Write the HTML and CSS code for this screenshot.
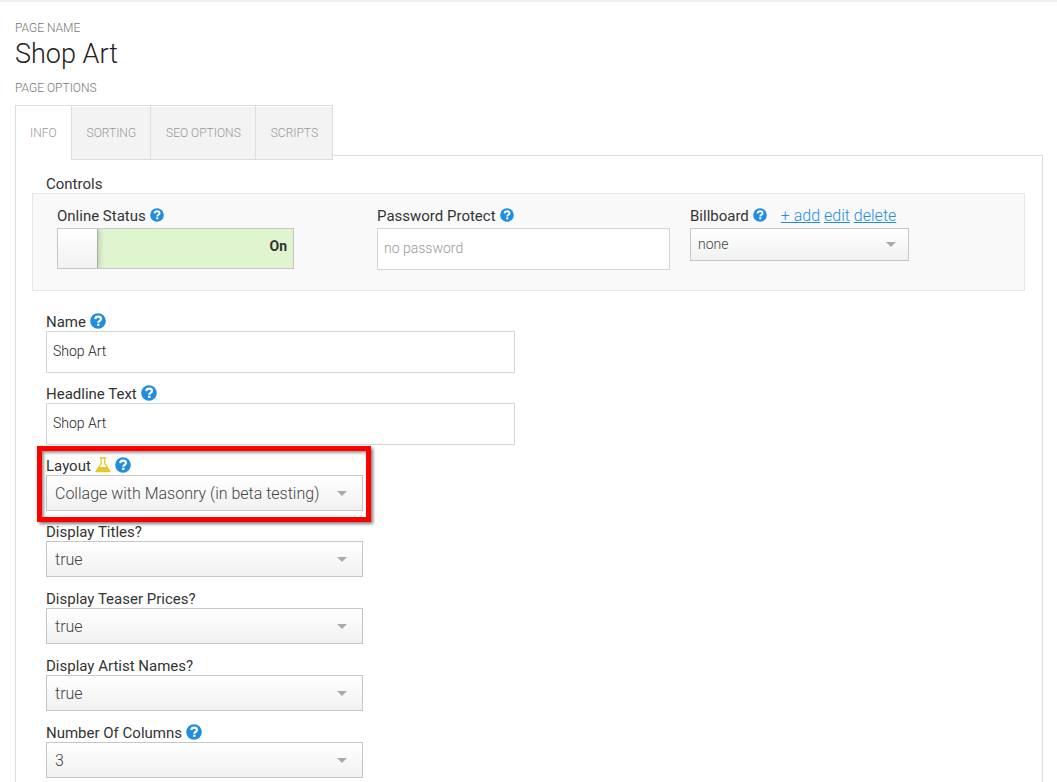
FILE: index.html
```html
<!DOCTYPE html>
<html lang="en">
<head>
<meta charset="utf-8">
<title>Shop Art</title>
<link rel="stylesheet" href="styles.css">
</head>
<body>
<svg class="sprite" aria-hidden="true">
  <symbol id="help" viewBox="0 0 16 16">
    <circle cx="8" cy="8" r="7.8" fill="#1f8de0"/>
    <path d="M5.2 6.200C5.400 4.500 6.500 3.700 8.100 3.700c1.700 0 2.800.9 2.800 2.200 0 1.900-2.600 1.900-2.600 3.800" fill="none" stroke="#fff" stroke-width="2.200"/>
    <rect x="7.1" y="10.700" width="2.400" height="2.200" fill="#fff"/>
  </symbol>
  <symbol id="flask" viewBox="0 0 16 16">
    <path d="M4.800 1h6.400M6.200 1v5.500L1.300 14.200h13.400L9.800 6.500V1" fill="none" stroke="#e6c72d" stroke-width="1.300"/>
    <path d="M3.800 10h8.400l3.600 5.300H.2z" fill="#e6c72d"/>
  </symbol>
</svg>
<header class="page-head">
  <p class="caption">PAGE NAME</p>
  <h1 class="title">Shop Art</h1>
  <p class="caption">PAGE OPTIONS</p>
</header>
<nav class="tabs" role="tablist">
  <button class="tab tab-active" type="button" role="tab" aria-selected="true">INFO</button>
  <button class="tab" type="button" role="tab" aria-selected="false">SORTING</button>
  <button class="tab" type="button" role="tab" aria-selected="false">SEO OPTIONS</button>
  <button class="tab" type="button" role="tab" aria-selected="false">SCRIPTS</button>
</nav>
<main class="panel">
  <h2 class="section-title">Controls</h2>
  <section class="controls">
    <div class="control">
      <div class="label-row"><label for="online">Online Status</label><svg class="icon icon-small"><use href="#help"/></svg></div>
      <div class="switch">
        <input class="switch-input" type="checkbox" role="switch" id="online" checked>
        <span class="switch-text">On</span>
      </div>
    </div>
    <div class="control">
      <div class="label-row"><label for="password">Password Protect</label><svg class="icon icon-small"><use href="#help"/></svg></div>
      <input class="text-input password" type="text" id="password" placeholder="no password">
    </div>
    <div class="control">
      <div class="label-row"><label for="billboard">Billboard</label><svg class="icon icon-small"><use href="#help"/></svg>
        <span class="links"><a href="#add">+ add</a> <a href="#edit">edit</a> <a href="#delete">delete</a></span></div>
      <select class="select select-small" id="billboard"><option>none</option></select>
    </div>
  </section>
  <form class="form">
    <div class="fields">
      <div class="field">
        <div class="label-row"><label for="name">Name</label><svg class="icon"><use href="#help"/></svg></div>
        <input class="text-input" type="text" id="name" value="Shop Art">
      </div>
      <div class="field">
        <div class="label-row"><label for="headline">Headline Text</label><svg class="icon"><use href="#help"/></svg></div>
        <input class="text-input" type="text" id="headline" value="Shop Art">
      </div>
      <div class="field field-select field-marked">
        <div class="label-row"><label for="layout">Layout</label><svg class="icon"><use href="#flask"/></svg><svg class="icon"><use href="#help"/></svg></div>
        <select class="select" id="layout"><option>Collage with Masonry (in beta testing)</option></select>
      </div>
    </div>
    <div class="fields fields-display">
      <div class="field field-select">
        <div class="label-row"><label for="titles">Display Titles?</label></div>
        <select class="select" id="titles"><option>true</option><option>false</option></select>
      </div>
      <div class="field field-select">
        <div class="label-row"><label for="prices">Display Teaser Prices?</label></div>
        <select class="select" id="prices"><option>true</option><option>false</option></select>
      </div>
      <div class="field field-select">
        <div class="label-row"><label for="artists">Display Artist Names?</label></div>
        <select class="select" id="artists"><option>true</option><option>false</option></select>
      </div>
      <div class="field field-select">
        <div class="label-row"><label for="columns">Number Of Columns</label><svg class="icon"><use href="#help"/></svg></div>
        <select class="select" id="columns"><option>3</option><option>4</option></select>
      </div>
    </div>
  </form>
</main>
</body>
</html>
```

FILE: styles.css
```css
* { box-sizing: border-box; }

body {
  display: flex;
  flex-direction: column;
  min-height: 100vh;
  margin: 0;
  padding: 18px 14px 0 15px;
  border-top: 2px solid #eee;
  background: #fff;
  color: #333;
  font: 15px/18px Roboto, "Liberation Sans", sans-serif;
}

.sprite { display: none; }

.caption {
  margin: 0;
  color: #777;
  font-size: 12px;
  font-weight: 300;
  line-height: 16px;
}

.title {
  margin: 0 0 8px;
  color: #222;
  font-size: 27px;
  font-weight: 300;
  line-height: 36px;
}

.tabs {
  position: relative;
  display: flex;
  align-items: flex-start;
  margin: 9px 0 -5px;
}

.tab {
  height: 55px;
  margin: 0;
  padding: 0 14px 0 15px;
  border: 1px solid #ddd;
  border-left-width: 0;
  background: #f3f3f3;
  box-shadow: inset 0 1px #fff;
  color: #999;
  font: 300 12px/16px Roboto, "Liberation Sans", sans-serif;
}

.tab-active {
  padding-left: 14px;
  border-left-width: 1px;
  border-bottom: 0;
  background: #fff;
}

.panel {
  flex: 1;
  padding: 19px 17px 0 16px;
  border: 1px solid #ddd;
  border-bottom: 0;
}

.section-title {
  margin: 0 14px;
  font-size: 15px;
  font-weight: 400;
  line-height: 18px;
}

.controls {
  display: grid;
  grid-template-columns: 320fr 313fr 310fr;
  padding: 13px 24px 20px;
  border: 1px solid #e6e6e6;
  background: #f9f9f9;
}

.label-row {
  display: flex;
  align-items: center;
  gap: 4px;
  height: 18px;
  white-space: nowrap;
}

.control .label-row { margin-bottom: 3px; }

.icon {
  width: 16px;
  height: 16px;
  margin-bottom: 2px;
}

.icon-small {
  width: 14px;
  height: 14px;
}

.links {
  margin-left: 10px;
  font-size: 16px;
  font-weight: 300;
}

.links a { color: #1f8de0; }

.switch {
  position: relative;
  width: 237px;
  height: 41px;
  overflow: hidden;
  border: 1px solid #c6c6c6;
  background: #e0f4d0;
}

.switch-input {
  display: block;
  width: 100%;
  height: 100%;
  margin: 0;
  appearance: none;
}

.switch-input::before {
  display: block;
  width: 39px;
  height: 39px;
  border-right: 1px solid #aaa;
  border-bottom: 1px solid #aaa;
  background: linear-gradient(#fff, #f1f1f1);
  box-shadow: 1px 0 6px rgba(0, 0, 0, 0.2);
  content: "";
}

.switch-text {
  position: absolute;
  top: 8px;
  right: 6px;
  font-size: 14px;
  font-weight: 700;
  pointer-events: none;
}

.text-input {
  display: block;
  width: 100%;
  height: 42px;
  padding: 0 6px 2px;
  border: 1px solid #d5d5d5;
  background: #fff;
  color: #222;
  font: 300 14px/18px Roboto, "Liberation Sans", sans-serif;
}

.text-input::placeholder { color: #999; }

.password { width: 293px; }

.select {
  display: block;
  width: 100%;
  height: 36px;
  padding: 1px 24px 0 8px;
  appearance: none;
  border: 1px solid #c6c6c6;
  border-radius: 0;
  background:
    url("data:image/svg+xml,%3Csvg xmlns='http://www.w3.org/2000/svg' width='10' height='5'%3E%3Cpath d='M0 0h10L5 5z' fill='%23aaa'/%3E%3C/svg%3E") right 15px top 15px / 10px 5px no-repeat,
    linear-gradient(#fff, #f1f1f1);
  color: #444;
  font: 300 16px/20px Roboto, "Liberation Sans", sans-serif;
}

.select-small {
  width: 219px;
  height: 33px;
  padding: 0 24px 1px 7px;
  background-position: right 12px top 13px, 0 0;
  font-size: 14px;
}

.form { padding: 22px 14px 0; }

.fields {
  display: grid;
  gap: 12px;
}

.fields-display {
  gap: 13px;
  margin-top: 12px;
}

.field {
  width: 100%;
  max-width: 469px;
}

.field-select { max-width: 317px; }

.field-marked { position: relative; }

.field-marked::after {
  position: absolute;
  inset: -11px -8px -11px -9px;
  border: 5px solid #f00;
  box-shadow: 2px 2px 3px rgba(0, 0, 0, 0.5), inset 2px 2px 3px rgba(0, 0, 0, 0.4);
  content: "";
  pointer-events: none;
}
```
